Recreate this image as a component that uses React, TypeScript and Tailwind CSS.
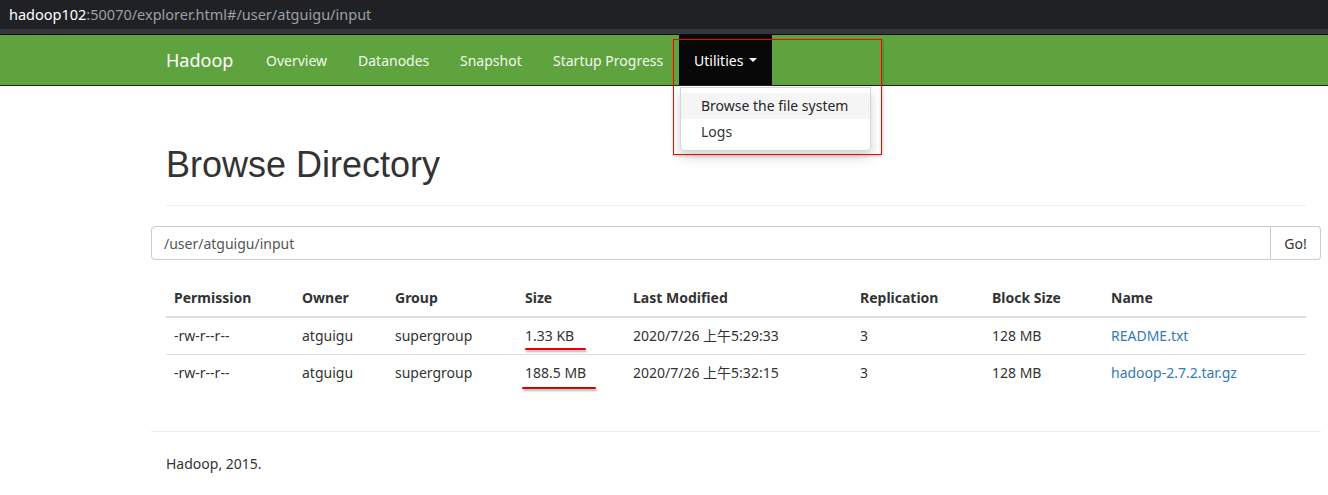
import React from "react";

const rows = [
  { perm: "-rw-r--r--", owner: "atguigu", group: "supergroup", size: "1.33 KB", modified: "2020/7/26 上午5:29:33", repl: "3", block: "128 MB", name: "README.txt" },
  { perm: "-rw-r--r--", owner: "atguigu", group: "supergroup", size: "188.5 MB", modified: "2020/7/26 上午5:32:15", repl: "3", block: "128 MB", name: "hadoop-2.7.2.tar.gz" },
];

const cols = ["w-[128px]", "w-[93px]", "w-[130px]", "w-[108px]", "w-[227px]", "w-[132px]", "w-[119px]", "flex-1"];

const links = [
  { label: "Overview", cls: "w-[92px]" },
  { label: "Datanodes", cls: "w-[102px]" },
  { label: "Snapshot", cls: "w-[93px]" },
  { label: "Startup Progress", cls: "w-[141px]" },
];

export default function App() {
  return (
    <div className="relative min-h-[495px] w-[1328px] overflow-hidden bg-white text-[14px] text-[#333] [font-family:'Noto_Sans','Noto_Sans_CJK_SC',sans-serif]">
      {/* browser address bar */}
      <div className="flex h-[29px] items-center bg-[#202124] pl-[9px] text-[14.5px] [font-family:'Noto_Sans',sans-serif]">
        <span className="text-white">hadoop102</span>
        <span className="text-[#9aa0a6]">:50070/explorer.html#/user/atguigu/input</span>
      </div>
      <div className="h-[6px] border-b border-[#111] bg-[#35363a]" />

      {/* navbar */}
      <nav className="h-[51px] border-b border-[#222] bg-[#5fa33e]">
        <div className="ml-[151px] flex h-[50px] items-stretch px-[15px]">
          <span className="flex w-[85px] items-center text-[18px] text-white">Hadoop</span>
          {links.map((l) => (
            <span key={l.label} className={`${l.cls} flex items-center pl-[15px] text-[#f2f7ee]`}>
              {l.label}
            </span>
          ))}
          <span className="flex w-[93px] items-center bg-[#080808] pl-[15px] text-white">
            Utilities
            <span className="ml-[6px] inline-block h-0 w-0 border-x-[4px] border-t-[4px] border-x-transparent border-t-white" />
          </span>
        </div>
      </nav>

      {/* dropdown */}
      <div className="absolute left-[680px] top-[87px] w-[191px] rounded-b-[4px] border border-[#d5d5d5] bg-white py-[5px] shadow-[0_6px_12px_rgba(0,0,0,0.175)]">
        <div className="bg-[#f5f5f5] px-[20px] py-[3px] leading-[20px] text-[#262626]">Browse the file system</div>
        <div className="px-[20px] py-[3px] leading-[20px] text-[#333]">Logs</div>
      </div>
      <div className="pointer-events-none absolute left-[673px] top-[39px] h-[116px] w-[209px] border border-[#ff0000] shadow-[1px_1px_3px_rgba(0,0,0,0.2)]" />

      {/* content */}
      <div className="ml-[151px] w-[1170px]">
        <div className="px-[15px]">
          <h1 className="mt-[59px] pb-[20px] text-[36px] leading-[40px] text-[#333] [font-family:'Liberation_Sans',sans-serif]">
            Browse Directory
          </h1>
          <div className="border-b border-[#eee]" />
        </div>

        <div className="mt-[20px] flex h-[34px]">
          <div className="flex flex-1 items-center rounded-l-[4px] border border-[#ccc] px-[12px] text-[#555]">/user/atguigu/input</div>
          <div className="flex w-[50px] items-center justify-center rounded-r-[4px] border border-l-0 border-[#ccc] text-[#333]">Go!</div>
        </div>

        <div className="mt-[20px] px-[15px]">
          <div className="flex border-b-2 border-[#ddd] font-bold">
            {["Permission", "Owner", "Group", "Size", "Last Modified", "Replication", "Block Size", "Name"].map((h, i) => (
              <div key={h} className={`${cols[i]} px-[8px] py-[8px] leading-[20px]`}>
                {h}
              </div>
            ))}
          </div>
          {rows.map((r, ri) => (
            <div key={r.name} className="flex border-b border-[#ddd] last:border-b-0">
              {[r.perm, r.owner, r.group, r.size, r.modified, r.repl, r.block].map((c, i) => (
                <div key={i} className={`${cols[i]} relative px-[8px] py-[8px] leading-[20px]`}>
                  {c}
                  {i === 3 && (
                    <span
                      className={`absolute h-[2px] rounded-full bg-[#e00000] shadow-[1px_2px_2px_rgba(0,0,0,0.3)] ${
                        ri === 0 ? "left-[8px] top-[30px] w-[61px]" : "left-[5px] top-[32px] w-[74px]"
                      }`}
                    />
                  )}
                </div>
              ))}
              <div className={`${cols[7]} px-[8px] py-[8px] leading-[20px] text-[#337ab7]`}>{r.name}</div>
            </div>
          ))}
        </div>

        <div className="mt-[40px] border-t border-[#eee]" />
        <div className="px-[15px] pt-[21px]">Hadoop, 2015.</div>
      </div>
    </div>
  );
}
